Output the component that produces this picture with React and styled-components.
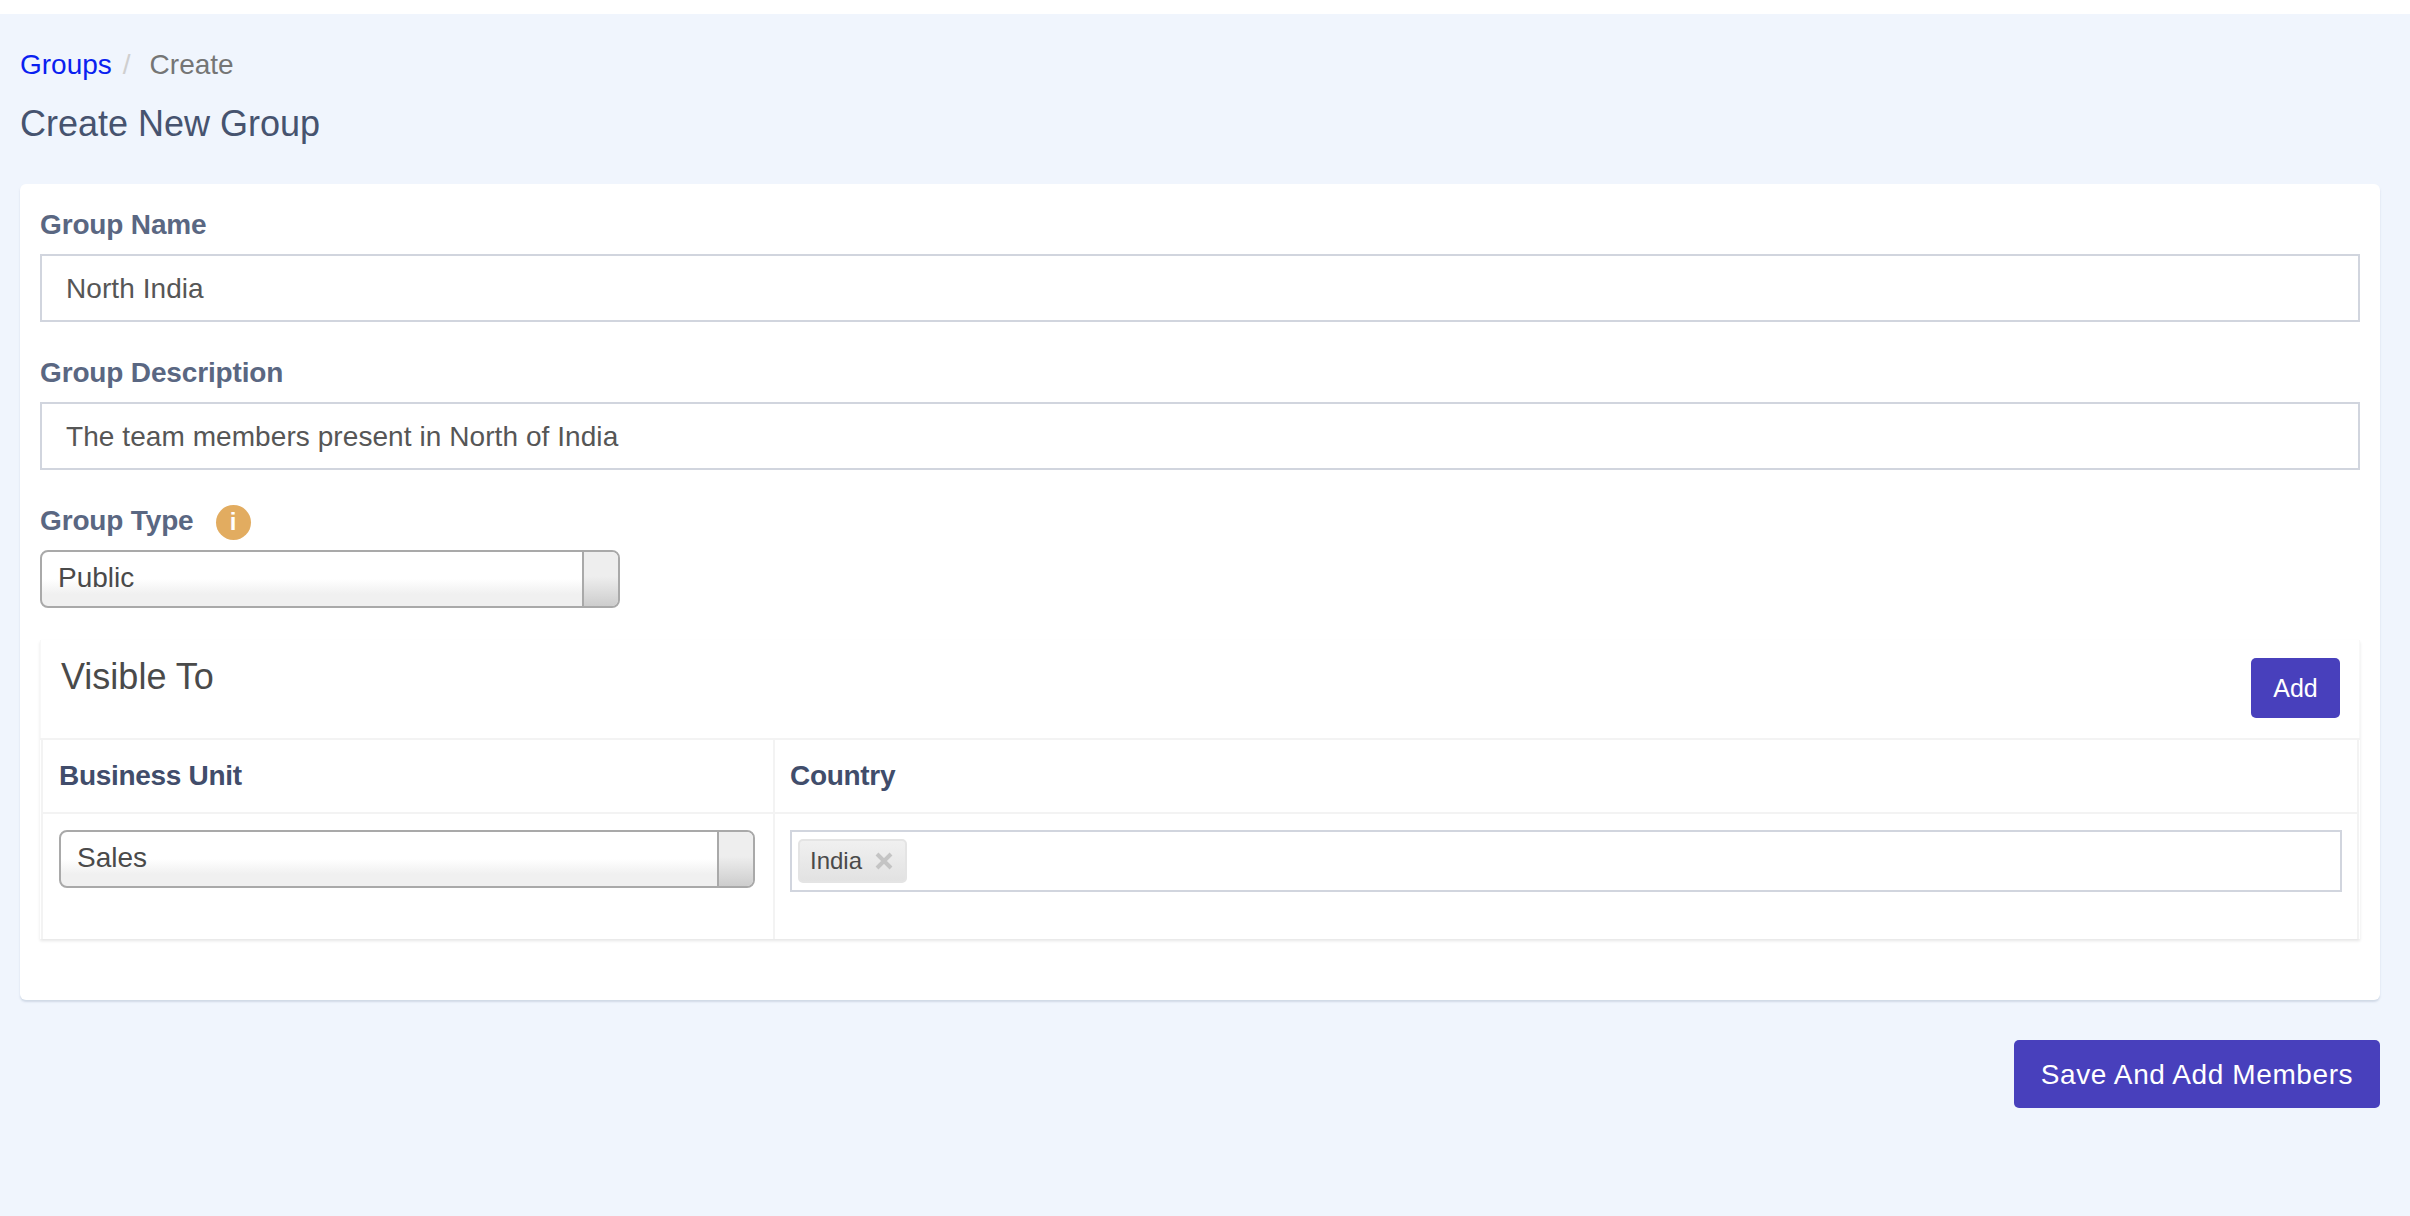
import React from "react"
import styled, { createGlobalStyle } from "styled-components"

const GlobalStyle = createGlobalStyle`
    html, body {
        margin: 0;
        padding: 0;
        background: #ffffff;
    }
    * {
        box-sizing: border-box;
    }
    body {
        font-family: "Liberation Sans", Arial, sans-serif;
    }
`

const Page = styled.div`
    margin-top: 14px;
    min-height: 1202px;
    padding: 35px 30px 0 20px;
    background: #f0f5fd;
`
const Breadcrumb = styled.nav`
    display: flex;
    align-items: center;
    height: 32px;
    font-size: 28px;
    line-height: 32px;
`
const CrumbLink = styled.a`
    color: #0a1ff0;
    text-decoration: none;
`
const CrumbSeparator = styled.span`
    margin: 0 19px 0 11px;
    color: #cfcfcf;
`
const CrumbCurrent = styled.span`
    color: #757575;
`
const Title = styled.h1`
    margin: 21px 0 38px;
    font-size: 36px;
    line-height: 44px;
    font-weight: 400;
    color: #46536f;
`
const Card = styled.section`
    height: 816px;
    padding: 23px 20px 0;
    background: #ffffff;
    border-radius: 6px;
    box-shadow: 0 2px 2px rgba(150, 165, 190, 0.35);
`
const Field = styled.div`
    margin-bottom: ${(props) => props.$gap || 33}px;
`
const Label = styled.label`
    display: flex;
    align-items: center;
    height: 36px;
    margin-bottom: 11px;
    font-size: 28px;
    font-weight: 700;
    letter-spacing: -0.15px;
    color: #5a6782;
`
const InfoBadge = styled.span`
    display: flex;
    align-items: center;
    justify-content: center;
    width: 35px;
    height: 35px;
    margin: 2px 0 0 22px;
    border-radius: 50%;
    background: #e2ac60;
    color: #ffffff;
    font-size: 24px;
    font-weight: 700;
`
const TextInput = styled.input`
    display: block;
    width: 100%;
    height: 68px;
    padding: 2px 24px 0;
    border: 2px solid #d1d5de;
    border-radius: 0;
    outline: none;
    background: #ffffff;
    font-family: inherit;
    font-size: 28px;
    letter-spacing: 0.07px;
    color: #565656;
`
const SelectBox = styled.div`
    display: flex;
    width: ${(props) => props.$width};
    height: 58px;
    border: 2px solid #a9a9a9;
    border-radius: 8px;
    overflow: hidden;
    background: linear-gradient(#ffffff 50%, #f0f0f0 78%, #f0f0f0);
`
const SelectValue = styled.div`
    flex: 1;
    padding-left: 16px;
    font-size: 28px;
    line-height: 52px;
    color: #4a4a4a;
`
const SelectArrow = styled.div`
    width: 36px;
    border-left: 2px solid #a9a9a9;
    background: linear-gradient(#eeeeee 45%, #cdcdcd);
`
const Panel = styled.div`
    box-shadow: 0 2px 3px rgba(0, 0, 0, 0.1);
    background: #ffffff;
`
const PanelHeader = styled.div`
    display: flex;
    align-items: flex-start;
    justify-content: space-between;
    height: 100px;
    padding: 18px 20px 0 21px;
    border-bottom: 2px solid #f3f3f3;
    box-shadow: inset 1px 0 0 #f8f8f8, inset -1px 0 0 #f8f8f8;
`
const PanelTitle = styled.h2`
    margin: 0;
    font-size: 36px;
    line-height: 38px;
    font-weight: 400;
    color: #4a4a4a;
`
const SmallButton = styled.button`
    width: 89px;
    height: 60px;
    padding: 0;
    border: none;
    border-radius: 5px;
    background: #4840bc;
    color: #ffffff;
    font-family: inherit;
    font-size: 25px;
`
const Table = styled.div`
    display: grid;
    grid-template-columns: 732px 1fr;
    margin: 0 1px;
    border-left: 2px solid #f3f3f3;
    border-right: 2px solid #f3f3f3;
`
const HeadCell = styled.div`
    display: flex;
    align-items: center;
    height: 74px;
    padding-left: ${(props) => props.$left}px;
    border-bottom: 2px solid #f3f3f3;
    border-right: ${(props) => (props.$divided ? "2px solid #f3f3f3" : "none")};
    font-size: 28px;
    font-weight: 700;
    letter-spacing: -0.3px;
    color: #414d6b;
`
const BodyCell = styled.div`
    height: 125px;
    padding: 16px ${(props) => props.$right}px 0 ${(props) => props.$left}px;
    border-right: ${(props) => (props.$divided ? "2px solid #f3f3f3" : "none")};
`
const TagInput = styled.div`
    display: flex;
    align-items: flex-start;
    height: 62px;
    padding: 7px 6px;
    border: 2px solid #d1d5de;
`
const Tag = styled.span`
    display: flex;
    align-items: center;
    width: 109px;
    height: 44px;
    padding: 0 0 0 10px;
    border: 2px solid #e4e4e4;
    border-radius: 5px;
    background: linear-gradient(#f0f0f0, #e2e2e2);
    font-size: 24px;
    color: #4a4a4a;
`
const TagRemove = styled.svg`
    width: 20px;
    height: 18px;
    margin-left: 12px;
`
const Footer = styled.div`
    display: flex;
    justify-content: flex-end;
    margin-top: 40px;
`
const SaveButton = styled.button`
    width: 366px;
    height: 68px;
    padding: 2px 0 0;
    border: none;
    border-radius: 5px;
    background: #4840bc;
    color: #ffffff;
    font-family: inherit;
    font-size: 28px;
    letter-spacing: 0.6px;
`

const Select = ({ value, width }) => (
    <SelectBox $width={width}>
        <SelectValue>{value}</SelectValue>
        <SelectArrow />
    </SelectBox>
)

const App = () => {
    return (
        <>
            <GlobalStyle />
            <Page>
                <Breadcrumb>
                    <CrumbLink href="#">Groups</CrumbLink>
                    <CrumbSeparator>/</CrumbSeparator>
                    <CrumbCurrent>Create</CrumbCurrent>
                </Breadcrumb>
                <Title>Create New Group</Title>
                <Card>
                    <Field>
                        <Label>Group Name</Label>
                        <TextInput defaultValue="North India" />
                    </Field>
                    <Field>
                        <Label>Group Description</Label>
                        <TextInput defaultValue="The team members present in North of India" />
                    </Field>
                    <Field $gap={32}>
                        <Label>
                            Group Type
                            <InfoBadge>i</InfoBadge>
                        </Label>
                        <Select value="Public" width="580px" />
                    </Field>
                    <Panel>
                        <PanelHeader>
                            <PanelTitle>Visible To</PanelTitle>
                            <SmallButton>Add</SmallButton>
                        </PanelHeader>
                        <Table>
                            <HeadCell $left={16} $divided>Business Unit</HeadCell>
                            <HeadCell $left={15}>Country</HeadCell>
                            <BodyCell $left={16} $right={18} $divided>
                                <Select value="Sales" width="696px" />
                            </BodyCell>
                            <BodyCell $left={15} $right={15}>
                                <TagInput>
                                    <Tag>
                                        India
                                        <TagRemove viewBox="0 0 20 18">
                                            <path d="M3 2 L17 16 M17 2 L3 16" stroke="#c4c4c4" strokeWidth="4" />
                                        </TagRemove>
                                    </Tag>
                                </TagInput>
                            </BodyCell>
                        </Table>
                    </Panel>
                </Card>
                <Footer>
                    <SaveButton>Save And Add Members</SaveButton>
                </Footer>
            </Page>
        </>
    )
}

export default App
